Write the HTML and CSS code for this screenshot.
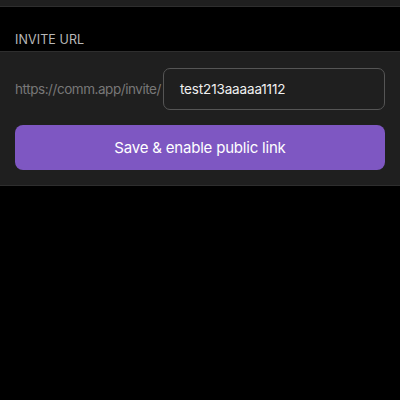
FILE: index.html
```html
<!DOCTYPE html>
<html>
<head>
<meta charset="utf-8">
<link rel="stylesheet" href="styles.css">
</head>
<body>
<div class="topbar"></div>
<div class="section-title">INVITE URL</div>
<div class="panel">
  <div class="url-row">
    <span class="prefix">https://comm.app/invite/</span>
    <div class="input">test213aaaaa1112</div>
  </div>
  <button class="save">Save &amp; enable public link</button>
</div>
</body>
</html>
```
FILE: styles.css
```css
html, body {
  margin: 0;
  padding: 0;
  background: #000;
  font-family: Inter, "Noto Sans", sans-serif;
  width: 400px;
  height: 400px;
  overflow: hidden;
}
.topbar {
  height: 6px;
  background: #1f1f1f;
  border-bottom: 1px solid #2e2e2e;
}
.section-title {
  padding: 26px 15px 4px;
  color: #b8b8b8;
  font-size: 12.5px;
  line-height: 14px;
  letter-spacing: 0.1px;
}
.panel {
  background: #1f1f1f;
  border-top: 1px solid #2e2e2e;
  border-bottom: 1px solid #2e2e2e;
  padding: 16px 15px 15px;
  display: flex;
  flex-direction: column;
  gap: 15px;
}
.url-row {
  display: flex;
  align-items: center;
  gap: 2px;
}
.prefix {
  color: #787878;
  font-size: 13.5px;
  letter-spacing: -0.45px;
}
.input {
  flex: 1;
  height: 42px;
  box-sizing: border-box;
  border: 1px solid #555;
  border-radius: 7px;
  padding: 0 16px;
  display: flex;
  align-items: center;
  color: #f0f0f0;
  font-size: 13.5px;
  letter-spacing: -0.15px;
}
.save {
  height: 45px;
  border: none;
  border-radius: 8px;
  background: #7e57c2;
  color: #fff;
  font-family: inherit;
  font-size: 15px;
  letter-spacing: -0.2px;
  cursor: pointer;
}
```
